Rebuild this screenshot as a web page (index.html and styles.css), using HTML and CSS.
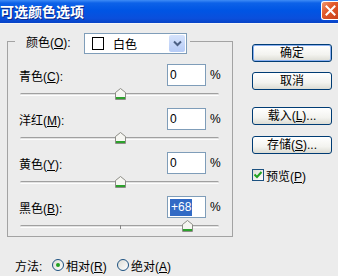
FILE: index.html
```html
<!DOCTYPE html>
<html lang="zh-CN">
<head>
  <meta charset="UTF-8">
  <title>可选颜色选项</title>
  <link rel="stylesheet" href="styles.css">
</head>
<body>
  <div class="dialog">
    <div class="title-bar">
      <div class="title-text">可选颜色选项</div>
      <div class="close-btn">
        <svg width="11" height="11" viewBox="0 0 11 11"><path d="M1.5 1.5 L9.5 9.5 M9.5 1.5 L1.5 9.5" stroke="#fff" stroke-width="2" stroke-linecap="square"/></svg>
      </div>
    </div>

    <div class="dialog-body">
      <div class="left-col">
        <div class="group">
          <div class="group-head">
            <span class="label">颜色(<u>O</u>):</span>
            <div class="select">
              <span class="swatch"></span>
              <span class="select-text">白色</span>
              <span class="drop-btn">
                <svg width="9" height="7" viewBox="0 0 9 7"><path d="M1 1.5 L4.5 5 L8 1.5" fill="none" stroke="#4d6185" stroke-width="2"/></svg>
              </span>
            </div>
            <span class="head-end"></span>
          </div>

          <div class="row">
            <span class="row-label">青色(<u>C</u>):</span>
            <div class="num-input">0</div>
            <span class="pct">%</span>
          </div>
          <div class="slider">
            <div class="track"></div>
            <div class="tick"></div>
            <div class="thumb" style="left: 50%"><svg width="11" height="12" viewBox="0 0 11 12"><path d="M0.5 4.5 L5.5 0.5 L10.5 4.5 V11.5 H0.5 Z" fill="#f6f6f2" stroke="#8c8c86"/><path d="M1 10 H10" stroke="#2ca12c" stroke-width="2"/></svg></div>
          </div>

          <div class="row">
            <span class="row-label">洋红(<u>M</u>):</span>
            <div class="num-input">0</div>
            <span class="pct">%</span>
          </div>
          <div class="slider">
            <div class="track"></div>
            <div class="tick"></div>
            <div class="thumb" style="left: 50%"><svg width="11" height="12" viewBox="0 0 11 12"><path d="M0.5 4.5 L5.5 0.5 L10.5 4.5 V11.5 H0.5 Z" fill="#f6f6f2" stroke="#8c8c86"/><path d="M1 10 H10" stroke="#2ca12c" stroke-width="2"/></svg></div>
          </div>

          <div class="row">
            <span class="row-label">黄色(<u>Y</u>):</span>
            <div class="num-input">0</div>
            <span class="pct">%</span>
          </div>
          <div class="slider">
            <div class="track"></div>
            <div class="tick"></div>
            <div class="thumb" style="left: 50%"><svg width="11" height="12" viewBox="0 0 11 12"><path d="M0.5 4.5 L5.5 0.5 L10.5 4.5 V11.5 H0.5 Z" fill="#f6f6f2" stroke="#8c8c86"/><path d="M1 10 H10" stroke="#2ca12c" stroke-width="2"/></svg></div>
          </div>

          <div class="row">
            <span class="row-label">黑色(<u>B</u>):</span>
            <div class="num-input"><span class="selected">+68</span></div>
            <span class="pct">%</span>
          </div>
          <div class="slider last">
            <div class="track"></div>
            <div class="tick"></div>
            <div class="thumb" style="left: 84%"><svg width="11" height="12" viewBox="0 0 11 12"><path d="M0.5 4.5 L5.5 0.5 L10.5 4.5 V11.5 H0.5 Z" fill="#f6f6f2" stroke="#8c8c86"/><path d="M1 10 H10" stroke="#2ca12c" stroke-width="2"/></svg></div>
          </div>
        </div>

        <div class="method">
          <span class="method-label">方法:</span>
          <span class="radio checked"></span>
          <span class="opt">相对(<u>R</u>)</span>
          <span class="radio"></span>
          <span class="opt">绝对(<u>A</u>)</span>
        </div>
      </div>

      <div class="right-col">
        <div class="btn default">确定</div>
        <div class="btn btn-cancel">取消</div>
        <div class="btn btn-load">载入(<u>L</u>)...</div>
        <div class="btn btn-save">存储(<u>S</u>)...</div>
        <div class="check-row">
          <span class="checkbox">
            <svg width="10" height="10" viewBox="0 0 10 10"><path d="M1.5 4.5 L4 7 L8.5 2" fill="none" stroke="#21a121" stroke-width="2"/></svg>
          </span>
          <span>预览(<u>P</u>)</span>
        </div>
      </div>
    </div>
  </div>
</body>
</html>
```

FILE: styles.css
```css
* {
  margin: 0;
  padding: 0;
  box-sizing: border-box;
}
body {
  width: 338px;
  height: 276px;
  overflow: hidden;
  background: #ececec;
  font-family: "Liberation Sans", "Noto Sans CJK SC", sans-serif;
  font-size: 12px;
  color: #000;
}
u {
  text-decoration: underline;
  text-underline-offset: 1px;
}
.dialog {
  width: 338px;
  height: 276px;
  background: #ececec;
}

/* Title bar */
.title-bar {
  height: 24px;
  display: flex;
  justify-content: space-between;
  align-items: flex-start;
  background: linear-gradient(#3f8cf6 0, #0d62e8 3px, #0055e4 45%, #0a4fdc 80%, #0843c6 100%);
  border-bottom: 1px solid #f6f6f6;
}
.title-text {
  color: #fff;
  font-family: "Noto Sans CJK SC", sans-serif;
  font-weight: bold;
  font-size: 14px;
  line-height: 22px;
  text-shadow: 1px 1px 0 #0a2a8a;
}
.close-btn {
  width: 17px;
  height: 19px;
  margin-top: 1px;
  border: 1px solid #fff;
  border-right: none;
  border-radius: 3px 0 0 3px;
  background: linear-gradient(135deg, #f09a72 0, #e25a2c 40%, #c9401a 100%);
  display: flex;
  align-items: center;
  justify-content: center;
}

/* Body */
.dialog-body {
  display: flex;
}
.left-col {
  width: 240px;
  padding-left: 7px;
}
.group {
  width: 226px;
  height: 196px;
  margin-top: 17px;
  border: 1px solid #a3a3a3;
  padding-left: 11px;
}
.group-head {
  display: flex;
  height: 21px;
  margin: -9px 0 0 -4px;
}
.group-head .label {
  width: 69px;
  padding-left: 11px;
  line-height: 21px;
  background: #ececec;
}
.head-end {
  width: 3px;
  background: #ececec;
}
.select {
  width: 103px;
  height: 21px;
  border: 1px solid #7f9db9;
  background: #fff;
  display: flex;
  align-items: center;
}
.swatch {
  width: 12px;
  height: 13px;
  border: 1px solid #000;
  margin-left: 7px;
}
.select-text {
  margin-left: 9px;
  flex: 1;
}
.drop-btn {
  width: 16px;
  height: 17px;
  margin-right: 1px;
  background: linear-gradient(#d6e3fc, #b6cbf6);
  border-radius: 2px;
  display: flex;
  align-items: center;
  justify-content: center;
}

.row {
  display: flex;
  align-items: center;
  height: 22px;
}
.group-head + .row {
  margin-top: 10px;
}
.row-label {
  width: 148px;
}
.num-input {
  width: 39px;
  height: 22px;
  border: 1px solid #7f9db9;
  background: #fff;
  padding-left: 2px;
  line-height: 20px;
}
.selected {
  background: #316ac5;
  color: #fff;
  padding: 1px 1px 2px;
}
.pct {
  margin-left: 4px;
}
.slider {
  position: relative;
  width: 199px;
  height: 22px;
  margin-left: 1px;
  padding-top: 7px;
}
.slider.last {
  height: 18px;
}
.track {
  height: 3px;
  border-top: 1px solid #a0a0a0;
  border-bottom: 1px solid #fdfdfd;
  background: #e2e2e2;
  border-radius: 2px;
}
.tick {
  position: absolute;
  left: 50%;
  top: 7px;
  width: 1px;
  height: 4px;
  background: #888;
}
.thumb {
  position: absolute;
  top: 2px;
  margin-left: -5px;
  width: 11px;
  height: 12px;
}
.thumb svg {
  display: block;
}

.method {
  display: flex;
  align-items: center;
  height: 16px;
  margin-top: 20px;
  margin-left: 8px;
}
.method-label {
  width: 37px;
}
.radio {
  width: 12px;
  height: 12px;
  border: 1px solid #1c5180;
  border-radius: 50%;
  background: linear-gradient(135deg, #dcdcd6, #fff);
  margin-right: 2px;
  position: relative;
}
.opt {
  width: 51px;
}
.radio.checked::after {
  content: "";
  position: absolute;
  left: 3px;
  top: 3px;
  width: 4px;
  height: 4px;
  border-radius: 50%;
  background: #21a121;
}

/* Right column */
.right-col {
  padding-top: 20px;
  padding-left: 12px;
  display: flex;
  flex-direction: column;
}
.btn {
  width: 80px;
  height: 18px;
  border: 1px solid #003c74;
  border-radius: 3px;
  background: linear-gradient(#ffffff, #f3f3ef 60%, #dcdcd4);
  text-align: center;
  line-height: 16px;
}
.btn.default {
  box-shadow: inset 0 0 0 1px #8bb0f0;
}
.btn-cancel {
  margin-top: 10px;
}
.btn-load {
  margin-top: 17px;
}
.btn-save {
  margin-top: 11px;
}
.check-row {
  display: flex;
  align-items: center;
  margin-top: 15px;
  height: 12px;
}
.checkbox {
  width: 12px;
  height: 12px;
  border: 1px solid #1c5180;
  background: linear-gradient(135deg, #dcdcd6, #fff);
  margin-right: 2px;
  display: flex;
  align-items: center;
  justify-content: center;
}
```
